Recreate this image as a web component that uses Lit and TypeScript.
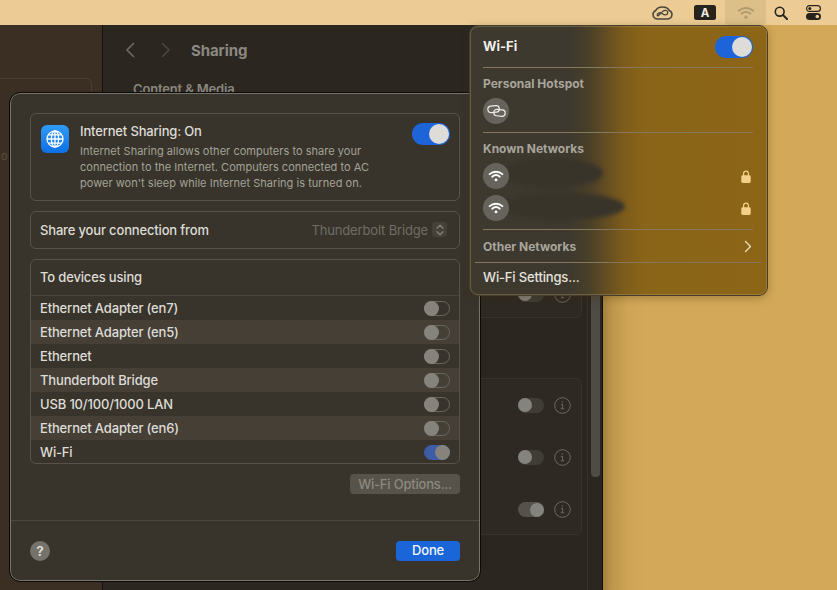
import { LitElement, html, css } from "lit";
import { customElement } from "lit/decorators.js";

const devices = [
  ["Ethernet Adapter (en7)", false],
  ["Ethernet Adapter (en5)", false],
  ["Ethernet", false],
  ["Thunderbolt Bridge", false],
  ["USB 10/100/1000 LAN", false],
  ["Ethernet Adapter (en6)", false],
  ["Wi-Fi", true],
] as const;

const wifiGlyph = (color: string, w: number) => html`
  <svg width=${w} viewBox="0 0 20 15" fill="none" stroke=${color} stroke-width="2.300" stroke-linecap="round">
    <path d="M2 5.200C6.600 1.200 13.400 1.200 18 5.200" />
    <path d="M5.200 8.400C8 6 12 6 14.800 8.400" />
    <circle cx="10" cy="12.400" r="1.800" fill=${color} stroke="none" />
  </svg>`;

const lock = html`
  <svg width="10" height="13" viewBox="0 0 10 13">
    <path d="M2.600 6V3.600a2.400 2.400 0 0 1 4.800 0V6" fill="none" stroke="#f3d088" stroke-width="1.200" />
    <rect x="0.300" y="5.300" width="9.400" height="7.700" rx="1.400" fill="#f3d088" />
  </svg>`;

const infoIcon = html`
  <svg width="17" height="17" viewBox="0 0 17 17" fill="none" stroke="#6c6962">
    <circle cx="8.500" cy="8.500" r="7.800" />
    <path d="M7 7.500h1.600v4.200M6.800 11.800h3.400" />
    <circle cx="8.400" cy="5" r=".7" fill="#6c6962" stroke="none" />
  </svg>`;

@customElement("app-root")
export class AppRoot extends LitElement {
  static styles = css`
    :host {
      display: block;
      position: relative;
      width: 837px;
      height: 590px;
      overflow: hidden;
      font-family: Inter, "Liberation Sans", sans-serif;
      font-size: 13px;
      letter-spacing: -0.16px;
      color: #dedcd6;
      background: linear-gradient(90deg, #a5813c 603px, #bd964a 612px, #cfa456 628px, #d3a858 645px);
    }
    svg {
      display: block;
    }

    /* menu bar */
    .menubar {
      height: 25px;
      background: #eccc94;
      display: flex;
      justify-content: flex-end;
      align-items: center;
    }
    .mb-item {
      height: 25px;
      display: flex;
      align-items: center;
      justify-content: center;
    }
    .mb-cc {
      width: 22px;
      margin-right: 21px;
    }
    .mb-input {
      width: 22px;
      margin-right: 9px;
    }
    .mb-wifi {
      width: 41px;
      background: #dcbf89;
      border-radius: 0 0 4px 4px;
    }
    .mb-search {
      width: 16px;
      margin: 0 16px 0 7px;
    }
    .mb-control {
      width: 16px;
      margin-right: 16px;
    }

    /* settings window behind */
    .back {
      position: absolute;
      left: 0;
      top: 25px;
      width: 603px;
      height: 565px;
      display: flex;
      background: #2b2720;
      border-right: 1px solid #0d0c0a;
      box-sizing: border-box;
    }
    .sidebar {
      width: 103px;
      flex: none;
      background: #3a2f22;
      border-right: 1px solid #15130f;
      box-sizing: border-box;
      padding-top: 53px;
    }
    .side-card {
      height: 27px;
      margin-right: 10px;
      border-radius: 0 6px 0 0;
      border-top: 1px solid #4a3f30;
      border-right: 1px solid #4a3f30;
    }
    .side-text {
      color: #5d5140;
      font-size: 11px;
      margin-top: 43px;
      padding-left: 1px;
    }
    .main {
      flex: 1;
      display: flex;
      min-width: 0;
    }
    .content {
      flex: 1;
      min-width: 0;
      padding: 0 5px 0 30px;
    }
    .nav {
      height: 50px;
      display: flex;
      align-items: center;
      margin-left: -30px;
      padding-left: 22px;
      color: #8c8982;
      font-size: 15px;
      font-weight: 700;
      letter-spacing: -0.1px;
    }
    .nav svg + svg {
      margin-left: 26px;
    }
    .nav span {
      margin-left: 20px;
    }
    .section {
      color: #8a867f;
      font-weight: 600;
      height: 16px;
      margin-top: 6px;
    }
    .bcard {
      border: 1px solid #37332b;
      border-radius: 6px;
      background: #2e2a23;
      box-sizing: border-box;
    }
    .bcard.one {
      height: 211px;
      margin-top: 10px;
      padding-top: 176px;
    }
    .bcard.two {
      height: 157px;
      margin-top: 60px;
    }
    .brow {
      height: 52.300px;
      display: flex;
      align-items: center;
      justify-content: flex-end;
      gap: 10px;
      padding-right: 10px;
    }
    .bcard.one .brow {
      height: 20px;
    }
    .btoggle {
      width: 26px;
      height: 15px;
      border-radius: 8px;
      background: #403d37;
      display: flex;
      align-items: center;
    }
    .btoggle i {
      width: 14px;
      height: 14px;
      border-radius: 50%;
      background: #85837e;
    }
    .btoggle.on {
      background: #55524c;
      justify-content: flex-end;
    }
    .track {
      width: 15px;
      flex: none;
      border-left: 1px solid #37332b;
      box-sizing: border-box;
      padding: 0 2px 0 3px;
    }
    .thumb {
      height: 452px;
      background: #4f4c45;
      border-radius: 0 0 4px 4px;
    }

    /* sheet */
    .sheet {
      position: absolute;
      left: 10px;
      top: 93px;
      width: 470px;
      height: 488px;
      box-sizing: border-box;
      background: #38342b;
      border: 1px solid #77746c;
      outline: 1px solid #0c0b09;
      border-radius: 10px;
      display: flex;
      flex-direction: column;
    }
    .sheet-body {
      flex: 1;
      padding: 19px 19px 0;
      display: flex;
      flex-direction: column;
    }
    .card {
      border: 1px solid #57534a;
      border-radius: 6px;
      box-sizing: border-box;
    }
    .intro {
      height: 88px;
      display: flex;
      padding: 11px 9px 0 10px;
    }
    .tile {
      width: 28px;
      height: 28px;
      flex: none;
      border-radius: 6px;
      background: linear-gradient(#2f9bf8, #0d6fe6);
      display: flex;
      align-items: center;
      justify-content: center;
    }
    .intro-text {
      flex: 1;
      margin-left: 11px;
    }
    .intro-title {
      line-height: 16px;
      margin-top: -2px;
      font-weight: 500;
    }
    .intro-desc {
      width: 310px;
      margin-top: 4px;
      font-size: 11px;
      line-height: 16px;
      letter-spacing: 0.03px;
      color: #a5a298;
    }
    .switch {
      width: 38px;
      height: 22px;
      flex: none;
      border-radius: 11px;
      background: #1c64d8;
      display: flex;
      align-items: center;
      justify-content: flex-end;
      padding-right: 1px;
      box-sizing: border-box;
    }
    .intro .switch {
      margin-top: -2px;
    }
    .switch i {
      width: 20px;
      height: 20px;
      border-radius: 50%;
      background: #dedcd8;
    }
    .source {
      height: 38px;
      margin-top: 10px;
      display: flex;
      align-items: center;
      padding: 0 12px 1px 9px;
    }
    .source b {
      font-weight: 500;
      flex: 1;
    }
    .source span {
      color: #706d64;
    }
    .stepper {
      width: 15px;
      height: 15px;
      margin-left: 4px;
      background: #454138;
      border-radius: 4px;
      display: flex;
      align-items: center;
      justify-content: center;
    }
    .devices {
      height: 205px;
      margin-top: 10px;
      overflow: hidden;
    }
    .dev-head {
      height: 36px;
      display: flex;
      align-items: center;
      padding: 0 0 1px 9px;
      font-weight: 500;
      border-bottom: 1px solid #48443b;
      box-sizing: border-box;
    }
    .dev-row {
      height: 24px;
      display: flex;
      align-items: center;
      justify-content: space-between;
      padding: 0 9px;
      font-weight: 500;
    }
    .dev-row:nth-child(odd) {
      background: #453f36;
    }
    .mini {
      width: 26px;
      height: 15px;
      box-sizing: border-box;
      border: 1px solid #6a675e;
      border-radius: 8px;
      position: relative;
    }
    .mini i {
      position: absolute;
      left: -1px;
      top: -1px;
      width: 15px;
      height: 15px;
      border-radius: 50%;
      background: #85837b;
    }
    .mini.on {
      background: #3e5da6;
      border-color: #3e5da6;
    }
    .mini.on i {
      left: auto;
      right: -1px;
    }
    .options-row {
      display: flex;
      justify-content: flex-end;
      margin-top: 10px;
    }
    .options {
      width: 110px;
      height: 20px;
      padding-bottom: 1px;
      box-sizing: border-box;
      border-radius: 4px;
      background: #57534a;
      color: #8c897f;
      font-weight: 500;
      letter-spacing: -0.2px;
      display: flex;
      align-items: center;
      justify-content: center;
    }
    .footer {
      height: 60px;
      border-top: 1px solid #4b473e;
      box-sizing: border-box;
      display: flex;
      align-items: center;
      justify-content: space-between;
      padding: 0 19px;
    }
    .help {
      width: 20px;
      height: 20px;
      border-radius: 50%;
      background: #75726c;
      color: #e6e4df;
      font-weight: 600;
      display: flex;
      align-items: center;
      justify-content: center;
    }
    .done {
      width: 64px;
      height: 20px;
      padding-bottom: 1px;
      box-sizing: border-box;
      border-radius: 4px;
      background: #1a66d9;
      color: #f3f6fb;
      font-weight: 500;
      display: flex;
      align-items: center;
      justify-content: center;
    }

    /* wi-fi menu */
    .panel {
      position: absolute;
      left: 469px;
      top: 25px;
      width: 299px;
      height: 271px;
      box-sizing: border-box;
      border: 1px solid #453e2f;
      outline: 1px solid rgba(200, 170, 110, 0.3);
      outline-offset: -2px;
      border-radius: 9px;
      padding: 0 14px 0 13px;
      overflow: hidden;
      background: linear-gradient(90deg, #3d392f 100px, #4b4028 120px, #6a5020 140px, #7e5d1b 155px, #8a6418 175px, #8c6517 100%);
      box-shadow: 0 2px 8px rgba(60, 40, 0, 0.3);
      letter-spacing: 0;
    }
    .p-top {
      height: 41px;
      display: flex;
      align-items: center;
      justify-content: space-between;
      font-weight: 700;
      color: #efeeea;
      border-bottom: 1px solid #85785c;
    }
    .p-top span {
      margin-top: -2px;
    }
    .p-label {
      height: 27px;
      padding-top: 8px;
      line-height: 16px;
      box-sizing: border-box;
      font-size: 12px;
      font-weight: 700;
      color: #a9a59b;
    }
    .p-other {
      height: 32px;
      padding: 0 1px 0 0;
      display: flex;
      align-items: center;
      justify-content: space-between;
      box-sizing: border-box;
      font-size: 12px;
      font-weight: 700;
      color: #a9a59b;
    }
    .p-hotspot {
      height: 37px;
      padding-top: 3px;
      box-sizing: border-box;
    }
    .p-list {
      padding-bottom: 5px;
    }
    .p-item {
      height: 32px;
      display: flex;
      align-items: center;
      justify-content: space-between;
      position: relative;
    }
    .p-sec {
      border-bottom: 1px solid #85785c;
    }
    .circle {
      width: 26px;
      height: 26px;
      border-radius: 50%;
      background: #66635c;
      display: flex;
      align-items: center;
      justify-content: center;
      position: relative;
      z-index: 1;
    }
    .smear {
      position: absolute;
      left: 20px;
      background: #39342a;
      border-radius: 50%;
      filter: blur(2px);
    }
    .smear.a {
      top: -2px;
      width: 100px;
      height: 30px;
    }
    .smear.b {
      top: 1px;
      width: 122px;
      height: 27px;
    }
    .p-lock {
      margin-right: 2px;
    }
    .p-settings {
      margin: 0 -8px;
      padding: 0 8px 4px;
      height: 32px;
      box-sizing: border-box;
      display: flex;
      align-items: center;
      border-top: 1px solid #85785c;
      font-weight: 500;
      letter-spacing: -0.16px;
      color: #e6e4de;
    }
  `;

  menubar() {
    return html`
      <div class="menubar">
        <div class="mb-item mb-cc">
          <svg width="21" height="14" viewBox="0 0 21 14" fill="none" stroke="#4a463c" stroke-width="1.600">
            <path d="M10.500 1C6.500 1 4.600 2.600 3.800 4.400 2 5.200 1 6.700 1 8.300 1 11.300 3.500 13 6 13h9c2.500 0 5-1.700 5-4.700 0-1.600-1-3.100-2.800-3.900C16.400 2.600 14.500 1 10.500 1Z" />
            <path d="M5.200 9c0-2.500 3.300-3 5.300-1.200s5.300 1.300 5.300-1.200-3.300-2.900-5.300-1-5.300 5.800-5.300 3.400Z" stroke-width="1.300" />
          </svg>
        </div>
        <div class="mb-item mb-input">
          <svg width="22" height="15" viewBox="0 0 22 15">
            <rect width="22" height="15" rx="2.500" fill="#27231c" />
            <text x="11" y="12" text-anchor="middle" fill="#f2ede2" font-family="Inter, sans-serif" font-size="11.500" font-weight="700">A</text>
          </svg>
        </div>
        <div class="mb-item mb-wifi">${wifiGlyph("#b09b70", 18)}</div>
        <div class="mb-item mb-search">
          <svg width="14" height="14" viewBox="0 0 14 14" fill="none" stroke="#26231d" stroke-width="1.600" stroke-linecap="round">
            <circle cx="5.700" cy="5.700" r="4.400" />
            <path d="M9 9l4 4" stroke-width="2" />
          </svg>
        </div>
        <div class="mb-item mb-control">
          <svg width="15" height="15" viewBox="0 0 15 15">
            <rect x=".6" y=".6" width="13.800" height="5.800" rx="2.900" fill="none" stroke="#27231c" stroke-width="1.200" />
            <circle cx="3.800" cy="3.500" r="1.500" fill="#27231c" />
            <rect y="8" width="15" height="7" rx="3.500" fill="#27231c" />
            <circle cx="11.300" cy="11.500" r="1.800" fill="#eccc94" />
          </svg>
        </div>
      </div>
    `;
  }

  backWindow() {
    const bToggle = (on = false) => html`
      <div class="brow">
        <div class="btoggle ${on ? "on" : ""}"><i></i></div>
        ${infoIcon}
      </div>`;
    return html`
      <div class="back">
        <div class="sidebar">
          <div class="side-card"></div>
          <div class="side-text">o</div>
        </div>
        <div class="main">
          <div class="content">
            <div class="nav">
              <svg width="10" height="16" viewBox="0 0 10 16" fill="none" stroke="#6f6c65" stroke-width="1.600" stroke-linecap="round" stroke-linejoin="round"><path d="M8.500 1.500 2 8l6.500 6.500" /></svg>
              <svg width="10" height="16" viewBox="0 0 10 16" fill="none" stroke="#4a473f" stroke-width="1.600" stroke-linecap="round" stroke-linejoin="round"><path d="M1.500 1.500 8 8l-6.500 6.500" /></svg>
              <span>Sharing</span>
            </div>
            <div class="section">Content &amp; Media</div>
            <div class="bcard one">${bToggle()}</div>
            <div class="bcard two">${bToggle()}${bToggle()}${bToggle(true)}</div>
          </div>
          <div class="track"><div class="thumb"></div></div>
        </div>
      </div>
    `;
  }

  sheet() {
    return html`
      <div class="sheet">
        <div class="sheet-body">
          <div class="card intro">
            <div class="tile">
              <svg width="20" height="20" viewBox="0 0 20 20" fill="none" stroke="#fff" stroke-width="1.300">
                <circle cx="10" cy="10" r="8" />
                <ellipse cx="10" cy="10" rx="3.600" ry="8" />
                <path d="M10 2v16M2 10h16M3.200 5.800h13.600M3.200 14.200h13.600" />
              </svg>
            </div>
            <div class="intro-text">
              <div class="intro-title">Internet Sharing: On</div>
              <div class="intro-desc">
                Internet Sharing allows other computers to share your connection to the Internet. Computers connected to AC power won't sleep while Internet Sharing is turned on.
              </div>
            </div>
            <div class="switch"><i></i></div>
          </div>
          <div class="card source">
            <b>Share your connection from</b>
            <span>Thunderbolt Bridge</span>
            <div class="stepper">
              <svg width="8" height="12" viewBox="0 0 8 12" fill="none" stroke="#85827a" stroke-width="1.300" stroke-linecap="round" stroke-linejoin="round">
                <path d="M1 4.200 4 1.200l3 3M1 7.800l3 3 3-3" />
              </svg>
            </div>
          </div>
          <div class="card devices">
            <div class="dev-head">To devices using</div>
            ${devices.map(
              ([name, on]) => html`
                <div class="dev-row">
                  <span>${name}</span>
                  <div class="mini ${on ? "on" : ""}"><i></i></div>
                </div>
              `
            )}
          </div>
          <div class="options-row"><div class="options">Wi-Fi Options...</div></div>
        </div>
        <div class="footer">
          <div class="help">?</div>
          <div class="done">Done</div>
        </div>
      </div>
    `;
  }

  panel() {
    return html`
      <div class="panel">
        <div class="p-top"><span>Wi-Fi</span> <div class="switch"><i></i></div></div>
        <div class="p-sec">
          <div class="p-label">Personal Hotspot</div>
          <div class="p-hotspot">
            <div class="circle">
              <svg width="19" height="12" viewBox="0 0 19 12" fill="none" stroke="#eceae5" stroke-width="1.200">
                <rect x=".8" y="1" width="11.500" height="6.500" rx="3.250" transform="rotate(-6 6 4)" />
                <rect x="6.700" y="4.500" width="11.500" height="6.500" rx="3.250" transform="rotate(6 12 8)" />
              </svg>
            </div>
          </div>
        </div>
        <div class="p-sec">
          <div class="p-label">Known Networks</div>
          <div class="p-list">
            <div class="p-item">
              <div class="circle">${wifiGlyph("#fff", 16)}</div>
              <div class="smear a"></div>
              <div class="p-lock">${lock}</div>
            </div>
            <div class="p-item">
              <div class="circle">${wifiGlyph("#fff", 16)}</div>
              <div class="smear b"></div>
              <div class="p-lock">${lock}</div>
            </div>
          </div>
        </div>
        <div class="p-other">
          Other Networks
          <svg width="8" height="13" viewBox="0 0 8 13" fill="none" stroke="#e8dcc0" stroke-width="1.400" stroke-linecap="round" stroke-linejoin="round"><path d="M1.500 1.500 6.500 6.500l-5 5" /></svg>
        </div>
        <div class="p-settings">Wi-Fi Settings...</div>
      </div>
    `;
  }

  render() {
    return html`${this.menubar()}${this.backWindow()}${this.sheet()}${this.panel()}`;
  }
}
